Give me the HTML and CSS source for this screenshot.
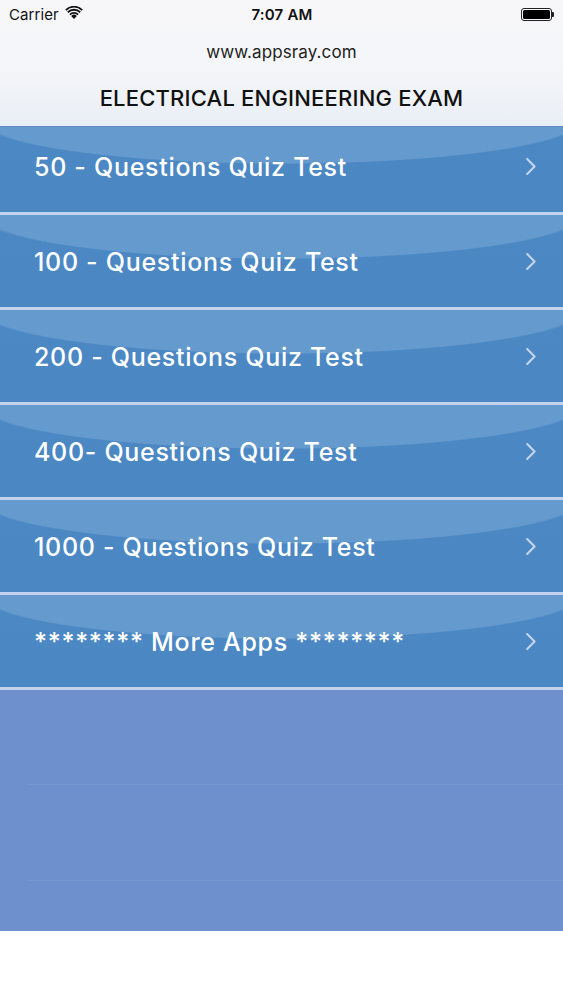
FILE: index.html
```html
<!DOCTYPE html>
<html lang="en">
<head>
<meta charset="utf-8">
<title>Electrical Engineering Exam</title>
<link rel="stylesheet" href="styles.css">
</head>
<body>
<div class="screen">
  <header class="topbar">
    <div class="status">
      <div class="status-left">
        <span class="carrier">Carrier</span>
        <svg class="wifi" width="18" height="13" viewBox="0 0 18 13">
          <path d="M9 13 L6.2 9.9 A4 4 0 0 1 11.8 9.9 Z" fill="#111"/>
          <path d="M4.3 7.9 A6.8 6.8 0 0 1 13.7 7.9 L12.5 9.2 A5.1 5.1 0 0 0 5.5 9.2 Z" fill="#111"/>
          <path d="M2.2 5.6 A9.8 9.8 0 0 1 15.8 5.6 L14.6 6.9 A8.1 8.1 0 0 0 3.4 6.9 Z" fill="#111"/>
          <path d="M0.2 3.4 A12.6 12.6 0 0 1 17.8 3.4 L16.6 4.7 A10.9 10.9 0 0 0 1.4 4.7 Z" fill="#111"/>
        </svg>
      </div>
      <span class="time">7:07 AM</span>
      <div class="status-right">
        <span class="battery"><span class="battery-fill"></span></span><span class="battery-nub"></span>
      </div>
    </div>
    <div class="site">www.appsray.com</div>
    <h1 class="title">ELECTRICAL ENGINEERING EXAM</h1>
  </header>

  <ul class="menu">
    <li class="item"><span class="label">50 - Questions Quiz Test</span><svg class="chev" width="10" height="17" viewBox="0 0 10 17"><polyline points="1.2,1 8.6,8.5 1.2,16" fill="none" stroke="#c6d6ee" stroke-width="2" stroke-linecap="round" stroke-linejoin="round"/></svg></li>
    <li class="item"><span class="label">100 - Questions Quiz Test</span><svg class="chev" width="10" height="17" viewBox="0 0 10 17"><polyline points="1.2,1 8.6,8.5 1.2,16" fill="none" stroke="#c6d6ee" stroke-width="2" stroke-linecap="round" stroke-linejoin="round"/></svg></li>
    <li class="item"><span class="label">200 - Questions Quiz Test</span><svg class="chev" width="10" height="17" viewBox="0 0 10 17"><polyline points="1.2,1 8.6,8.5 1.2,16" fill="none" stroke="#c6d6ee" stroke-width="2" stroke-linecap="round" stroke-linejoin="round"/></svg></li>
    <li class="item"><span class="label">400- Questions Quiz Test</span><svg class="chev" width="10" height="17" viewBox="0 0 10 17"><polyline points="1.2,1 8.6,8.5 1.2,16" fill="none" stroke="#c6d6ee" stroke-width="2" stroke-linecap="round" stroke-linejoin="round"/></svg></li>
    <li class="item"><span class="label">1000 - Questions Quiz Test</span><svg class="chev" width="10" height="17" viewBox="0 0 10 17"><polyline points="1.2,1 8.6,8.5 1.2,16" fill="none" stroke="#c6d6ee" stroke-width="2" stroke-linecap="round" stroke-linejoin="round"/></svg></li>
    <li class="item"><span class="label">******** More Apps ********</span><svg class="chev" width="10" height="17" viewBox="0 0 10 17"><polyline points="1.2,1 8.6,8.5 1.2,16" fill="none" stroke="#c6d6ee" stroke-width="2" stroke-linecap="round" stroke-linejoin="round"/></svg></li>
  </ul>

  <div class="empty">
    <div class="empty-row first"></div>
    <div class="empty-row"></div>
    <div class="empty-row last"></div>
  </div>
</div>
</body>
</html>
```

FILE: styles.css
```css
* { box-sizing: border-box; }
html, body { margin: 0; padding: 0; background: #ffffff; }
body { font-family: Inter, "Noto Sans", "Liberation Sans", sans-serif; }

.screen { width: 563px; height: 1000px; overflow: hidden; background: #ffffff; }

.topbar {
  position: relative;
  z-index: 2;
  height: 127px;
  background: linear-gradient(#f7f7f9 0%, #f5f6f9 50%, #e9eff6 100%);
  border-bottom: 1px solid #5d8cc4;
}

.status {
  height: 28px;
  display: grid;
  grid-template-columns: 1fr auto 1fr;
  align-items: center;
  padding: 0 8px 0 9px;
  font-size: 15px;
  color: #111;
}
.status-left { display: flex; align-items: center; gap: 6px; }
.carrier { font-weight: 400; letter-spacing: 0.1px; }
.wifi { margin-top: -3px; }
.time { font-weight: 600; letter-spacing: 0.2px; }
.status-right { display: flex; justify-content: flex-end; align-items: center; padding-right: 1px; }
.battery {
  width: 31px; height: 13px;
  border: 1px solid #222;
  border-radius: 3px;
  padding: 1px;
  display: flex;
}
.battery-fill { flex: 1; background: #000; border-radius: 1.5px; }
.battery-nub { width: 2px; height: 5px; background: #222; border-radius: 0 1px 1px 0; }

.site {
  text-align: center;
  font-size: 17px;
  color: #222;
  margin-top: 13px;
  line-height: 22px;
  letter-spacing: 0.1px;
}
.title {
  margin: 22px 0 0;
  text-align: center;
  font-size: 22px;
  font-weight: 500;
  color: #111;
  line-height: 26px;
  letter-spacing: 0.2px;
}

.menu {
  list-style: none;
  margin: -7px 0 0;
  padding: 0;
}
.item {
  height: 95px;
  display: flex;
  align-items: center;
  justify-content: space-between;
  padding: 2px 27px 0 34px;
  border-bottom: 3px solid #c3d3ee;
  background:
    radial-gradient(302px 44px at 50% 0, rgba(160, 195, 228, 0.3) 0, rgba(160, 195, 228, 0.3) 98%, rgba(160,195,228,0) 100%),
    linear-gradient(#4c89c4, #4a87c3);
}
.label {
  color: #ffffff;
  font-size: 25px;
  font-weight: 500;
  letter-spacing: 0.7px;
}
.chev { display: block; margin-top: -2px; }

.empty {
  height: 241px;
  background: #6e90cc;
  display: flex;
  flex-direction: column;
}
.empty-row { height: 96px; margin-left: 28px; border-bottom: 1px solid #7696cd; }
.empty-row.first { height: 95px; }
.empty-row.last { height: auto; flex: 1; border-bottom: none; }
```
